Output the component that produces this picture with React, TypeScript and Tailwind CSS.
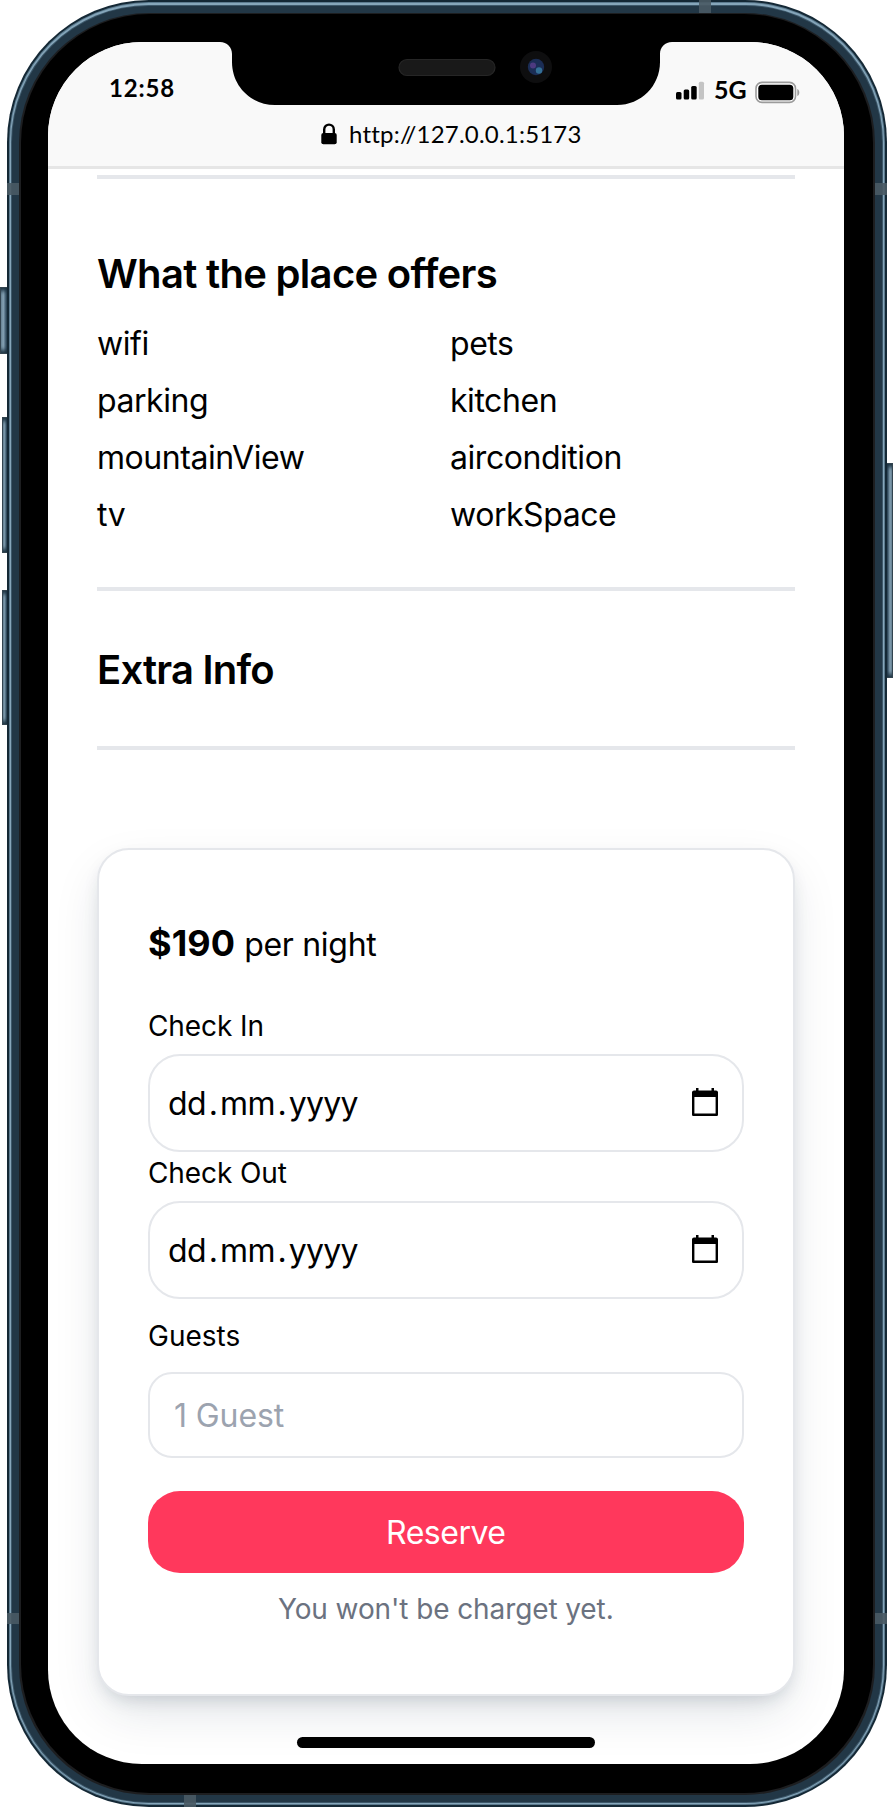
import React from "react";

const amenities = [
  "wifi",
  "pets",
  "parking",
  "kitchen",
  "mountainView",
  "aircondition",
  "tv",
  "workSpace",
];

function SideButton({ className }: { className: string }) {
  return (
    <div
      className={`absolute border border-[#33444f] bg-linear-to-r from-[#86a3b5] from-40% to-[#2b4355] shadow-[inset_0_5px_4px_-2px_#1d3342,inset_0_-5px_4px_-2px_#1d3342] ${className}`}
    />
  );
}

function Band({ className }: { className: string }) {
  return <div className={`absolute bg-[#495a64]/90 ${className}`} />;
}

function Notch() {
  return (
    <svg className="absolute left-[169px] top-0" width="460" height="64" viewBox="217 42 460 64">
      <path
        d="M219 41.5 V42 H220 C227 42 232 47 232 54 V62 C232 86 251 105 275 105 H617 C641 105 660 86 660 62 V54 C660 47 665 42 672 42 V41.5 Z"
        fill="#000"
      />
      <rect x="399" y="59.5" width="96" height="16" rx="8" fill="#191919" stroke="#262626" strokeWidth="1.2" />
      <circle cx="536" cy="67" r="16" fill="#0e0e0f" />
      <circle cx="536" cy="67" r="8.2" fill="#1b2d55" />
      <circle cx="533" cy="65.5" r="3" fill="#4d3a80" />
      <circle cx="539" cy="70.5" r="3.2" fill="#347096" />
    </svg>
  );
}

function BrowserBar() {
  return (
    <header className="h-[127px] shrink-0 border-b-[3px] border-[#e6e6e6] bg-[#f9f9f9] font-['Lato',sans-serif] text-black">
      <div className="flex h-[72px] items-start justify-between pl-[61px] pr-[43.5px]">
        <span className="mt-[29px] text-[24px] font-bold leading-[34px] tracking-[0.8px]">12:58</span>
        <div className="mt-[32px] flex items-start">
          <svg className="mt-[7px]" width="29" height="19" viewBox="0 0 29 19">
            <rect x="0" y="11" width="5.5" height="7.5" rx="1.5" />
            <rect x="7.7" y="8.5" width="5.5" height="10" rx="1.5" />
            <rect x="15.2" y="5" width="5.5" height="13.5" rx="1.5" />
            <rect x="22.8" y="0.7" width="5.2" height="17.8" rx="1.5" fill="#c4c4c4" />
          </svg>
          <span className="-mt-[2px] ml-[9px] w-[33px] whitespace-nowrap text-[25px] font-bold leading-[34px]">5G</span>
          <svg className="ml-[8px] mt-[7px]" width="45" height="23" viewBox="0 0 45 23">
            <rect x="1" y="1.4" width="39.5" height="20" rx="6" fill="#fff" stroke="#9b9b9b" strokeWidth="1.6" />
            <rect x="3.3" y="3.7" width="35" height="15.6" rx="3.5" />
            <path d="M42.3 8 C45 9 45 14 42.3 15 Z" fill="#9b9b9b" />
          </svg>
        </div>
      </div>
      <div className="flex h-[40px] items-center pl-[273px]">
        <svg width="16" height="22" viewBox="0 0 16 22">
          <path d="M3.2 11 V6.5 C3.2 0 12.8 0 12.8 6.5 V11" fill="none" stroke="#000" strokeWidth="2.4" />
          <rect x="0.3" y="10" width="15.4" height="11.3" rx="2" />
        </svg>
        <span className="ml-[12px] text-[24px] leading-[34px] tracking-[0.2px]">http://127.0.0.1:5173</span>
      </div>
    </header>
  );
}

function Rule({ className }: { className: string }) {
  return <hr className={`h-[4px] shrink-0 border-0 bg-[#e5e7eb] ${className}`} />;
}

function DateField({ label, className }: { label: string; className: string }) {
  return (
    <label className={`block ${className}`}>
      <span className="block text-[28px] leading-[40px] tracking-[-0.1px]">{label}</span>
      <span className="mt-[7.5px] flex h-[98px] items-center justify-between rounded-[32px] border-2 border-[#e5e7eb] pl-[18px] pr-[24px]">
        <span className="mt-[2px] flex text-[32px] leading-[40px] tracking-[-0.5px]">
          <span>dd</span>
          <span className="px-[2.5px]">.</span>
          <span>mm</span>
          <span className="px-[2.5px]">.</span>
          <span className="tracking-[-0.7px]">yyyy</span>
        </span>
        <svg width="26" height="28" viewBox="0 0 26 28" className="-mt-[2px]">
          <path d="M1.2 4 V26.8 H24.8 V4" fill="none" stroke="#000" strokeWidth="2.4" strokeLinejoin="round" />
          <path d="M0 9 V4.5 Q0 2.5 2 2.5 H4 V0 H6.5 V2.5 H19.5 V0 H22 V2.5 H24 Q26 2.5 26 4.5 V9 Z" />
        </svg>
      </span>
    </label>
  );
}

function BookingCard() {
  return (
    <section className="mt-[98px] flex h-[848.5px] shrink-0 flex-col rounded-[32px] border-2 border-[#e5e7eb] bg-white px-[49px] pt-[65.5px] shadow-[0_20px_50px_-6px_rgba(15,35,60,0.13),0_8px_20px_-8px_rgba(15,35,60,0.22)]">
      <p className="flex h-[56px] items-baseline text-[32px] leading-[56px] tracking-[-0.3px]">
        <span className="mr-[9px] text-[36px] font-bold tracking-[0.1px]">$190</span>
        per night
      </p>
      <DateField label="Check In" className="mt-[35px]" />
      <DateField label="Check Out" className="mt-[1.5px]" />
      <label className="mt-[17px] block">
        <span className="block text-[28px] leading-[40px]">Guests</span>
        <input
          className="mt-[16px] block h-[86px] w-full rounded-[24px] border-2 border-[#e5e7eb] px-[24px] pt-[2px] text-[32px] tracking-[-0.1px] placeholder:text-[#9ca3af]"
          placeholder="1 Guest"
        />
      </label>
      <button className="mt-[33px] h-[82px] shrink-0 rounded-[32px] bg-[#ff385c] pt-[2px] text-[32px] tracking-[-0.5px] text-white">
        Reserve
      </button>
      <p className="mt-[16px] text-center text-[28px] leading-[40px] tracking-[-0.1px] text-[#6b7280]">
        You won't be charget yet.
      </p>
    </section>
  );
}

export default function App() {
  return (
    <div className="relative h-[1807px] w-[893px] overflow-hidden bg-white pl-[6.5px] pr-[6px] font-['Inter',sans-serif] text-black">
      <SideButton className="left-0 top-[287px] h-[67px] w-[8px]" />
      <SideButton className="left-[2px] top-[417px] h-[136px] w-[6px]" />
      <SideButton className="left-[2px] top-[590px] h-[135px] w-[6px]" />
      <SideButton className="right-0 top-[463px] h-[215px] w-[7px] rotate-180" />

      <div className="relative h-full rounded-[142px] bg-[#142835] p-[2px]">
        <div className="h-full rounded-[140px] bg-[#5c7b8f] p-[1px]">
          <div className="h-full rounded-[139px] bg-[#86a6ba] p-[1.5px]">
            <div className="h-full rounded-[137.5px] bg-[#3d586a] p-[1px]">
              <div className="h-full rounded-[136.5px] bg-[#223746] p-[7px]">
                <div className="h-full rounded-[130px] bg-[#1d1e20] p-[1.5px]">
                  <div className="h-full rounded-[129px] bg-black pb-[29.5px] pl-[27.5px] pr-[29.5px] pt-[28px]">
                    <main className="relative flex h-full flex-col overflow-hidden rounded-[94px] bg-white">
                      <BrowserBar />
                      <Notch />
                      <div className="flex min-h-0 grow flex-col px-[49px]">
                        <Rule className="mt-[6px]" />
                        <h2 className="mt-[67px] text-[40px] font-semibold leading-[56px] tracking-[-0.7px]">
                          What the place offers
                        </h2>
                        <ul className="mt-[12.8px] grid grid-cols-[353px_1fr] text-[32px] leading-[57.2px] tracking-[-0.45px]">
                          {amenities.map((name) => (
                            <li key={name}>{name}</li>
                          ))}
                        </ul>
                        <Rule className="mt-[43.2px]" />
                        <h2 className="mt-[51.5px] text-[40px] font-semibold leading-[56px] tracking-[-0.8px]">
                          Extra Info
                        </h2>
                        <Rule className="mt-[47.5px]" />
                        <BookingCard />
                      </div>
                      <div className="absolute bottom-[16px] left-[249px] h-[10.5px] w-[298px] rounded-full bg-black" />
                    </main>
                  </div>
                </div>
              </div>
            </div>
          </div>
        </div>
        <Band className="left-0 top-[183px] h-[12px] w-[12.5px]" />
        <Band className="right-0 top-[183px] h-[12px] w-[12.5px]" />
        <Band className="left-[692.5px] top-0 h-[13px] w-[12px]" />
        <Band className="left-0 top-[1613px] h-[11px] w-[12.5px]" />
        <Band className="right-0 top-[1613px] h-[11px] w-[12.5px]" />
        <Band className="bottom-0 left-[177.5px] h-[12px] w-[12px]" />
      </div>
    </div>
  );
}
